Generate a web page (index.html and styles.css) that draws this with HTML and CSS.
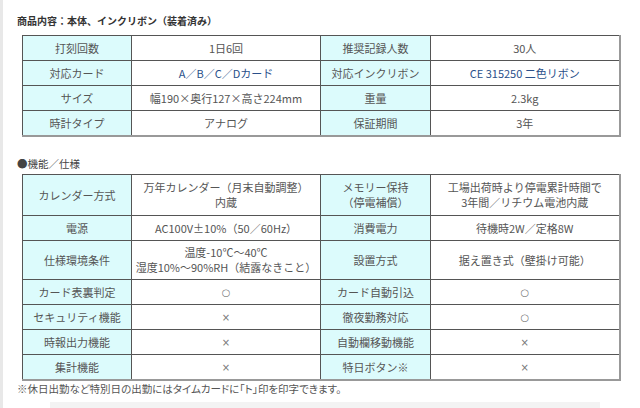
FILE: index.html
```html
<!DOCTYPE html>
<html lang="ja">
<head>
<meta charset="utf-8">
<link rel="stylesheet" href="styles.css">
</head>
<body>
<div class="page">
  <p class="title">商品内容：本体、インクリボン（装着済み）</p>
  <table class="spec spec1">
    <colgroup><col class="c1"><col class="c2"><col class="c3"><col class="c4"></colgroup>
    <tr><th>打刻回数</th><td>1日6回</td><th>推奨記録人数</th><td>30人</td></tr>
    <tr><th>対応カード</th><td class="link">A／B／C／Dカード</td><th>対応インクリボン</th><td class="link">CE 315250 二色リボン</td></tr>
    <tr><th>サイズ</th><td>幅190×奥行127×高さ224mm</td><th>重量</th><td>2.3kg</td></tr>
    <tr><th>時計タイプ</th><td>アナログ</td><th>保証期間</th><td>3年</td></tr>
  </table>
  <p class="sub">●機能／仕様</p>
  <table class="spec spec2">
    <colgroup><col class="c1"><col class="c2"><col class="c3"><col class="c4"></colgroup>
    <tr class="tall"><th>カレンダー方式</th><td>万年カレンダー（月末自動調整）<br>内蔵</td><th>メモリー保持<br>（停電補償）</th><td>工場出荷時より停電累計時間で<br>3年間／リチウム電池内蔵</td></tr>
    <tr><th>電源</th><td>AC100V±10%（50／60Hz）</td><th>消費電力</th><td>待機時2W／定格8W</td></tr>
    <tr class="tall2"><th>仕様環境条件</th><td>温度-10℃～40℃<br>湿度10%～90%RH（結露なきこと）</td><th>設置方式</th><td>据え置き式（壁掛け可能）</td></tr>
    <tr><th>カード表裏判定</th><td class="mark">○</td><th>カード自動引込</th><td class="mark">○</td></tr>
    <tr><th>セキュリティ機能</th><td class="mark">×</td><th>徹夜勤務対応</th><td class="mark">○</td></tr>
    <tr><th>時報出力機能</th><td class="mark">×</td><th>自動欄移動機能</th><td class="mark">×</td></tr>
    <tr><th>集計機能</th><td class="mark">×</td><th>特日ボタン※</th><td class="mark">×</td></tr>
  </table>
  <p class="note">※休日出勤など特別日の出勤にはタイムカードに「ト」印を印字できます。</p>
  <div class="fade"></div>
</div>
</body>
</html>
```

FILE: styles.css
```css
html, body {
  margin: 0;
  padding: 0;
  background: #fff;
}
body {
  font-family: "Noto Sans CJK JP", "Noto Sans", sans-serif;
  font-size: 11px;
  color: #555;
  width: 640px;
  height: 408px;
  overflow: hidden;
}
.page {
  border-left: 3px solid #e8e8e8;
  padding: 13px 0 0 14px;
  height: 395px;
}
.title {
  margin: 0;
  font-weight: bold;
  font-size: 10px;
  color: #333;
  line-height: 16px;
  height: 22px;
}
.sub {
  margin: 19px 0 0 0;
  line-height: 16px;
  height: 18px;
  font-size: 10.5px;
  color: #444;
}
.note {
  margin: 0;
  line-height: 16px;
  font-size: 10.5px;
  color: #555;
  font-feature-settings: "palt";
}
.spec {
  margin-left: 5px;
  width: 598px;
  border-collapse: collapse;
  table-layout: fixed;
  border-top: 1px solid #555;
  border-left: 1px solid #555;
  border-right: 2px solid #999;
  border-bottom: 2px solid #999;
}
.c1 { width: 109px; }
.c2 { width: 189px; }
.c3 { width: 110px; }
.c4 { width: 189px; }
.spec th, .spec td {
  border: 1px solid #555;
  text-align: center;
  font-weight: normal;
  padding: 0;
  height: 24px;
  line-height: 15px;
  color: #555;
}
.spec th {
  background: #dcfbfc;
}
.spec tr:last-child th, .spec tr:last-child td { border-bottom: 2px solid #999; }
.spec td:last-child { border-right: 2px solid #999; }
.spec td.link { color: #2a4f8a; }
.spec td.mark {
  font-family: "DejaVu Sans", sans-serif;
  font-size: 10px;
  color: #777;
}
.spec2 .tall th, .spec2 .tall td { height: 40px; }
.spec2 .tall2 th, .spec2 .tall2 td { height: 38px; }
.fade {
  margin: 5px 0 0 33px;
  width: 550px;
  height: 8px;
  background: #f3f3f3;
}
```
